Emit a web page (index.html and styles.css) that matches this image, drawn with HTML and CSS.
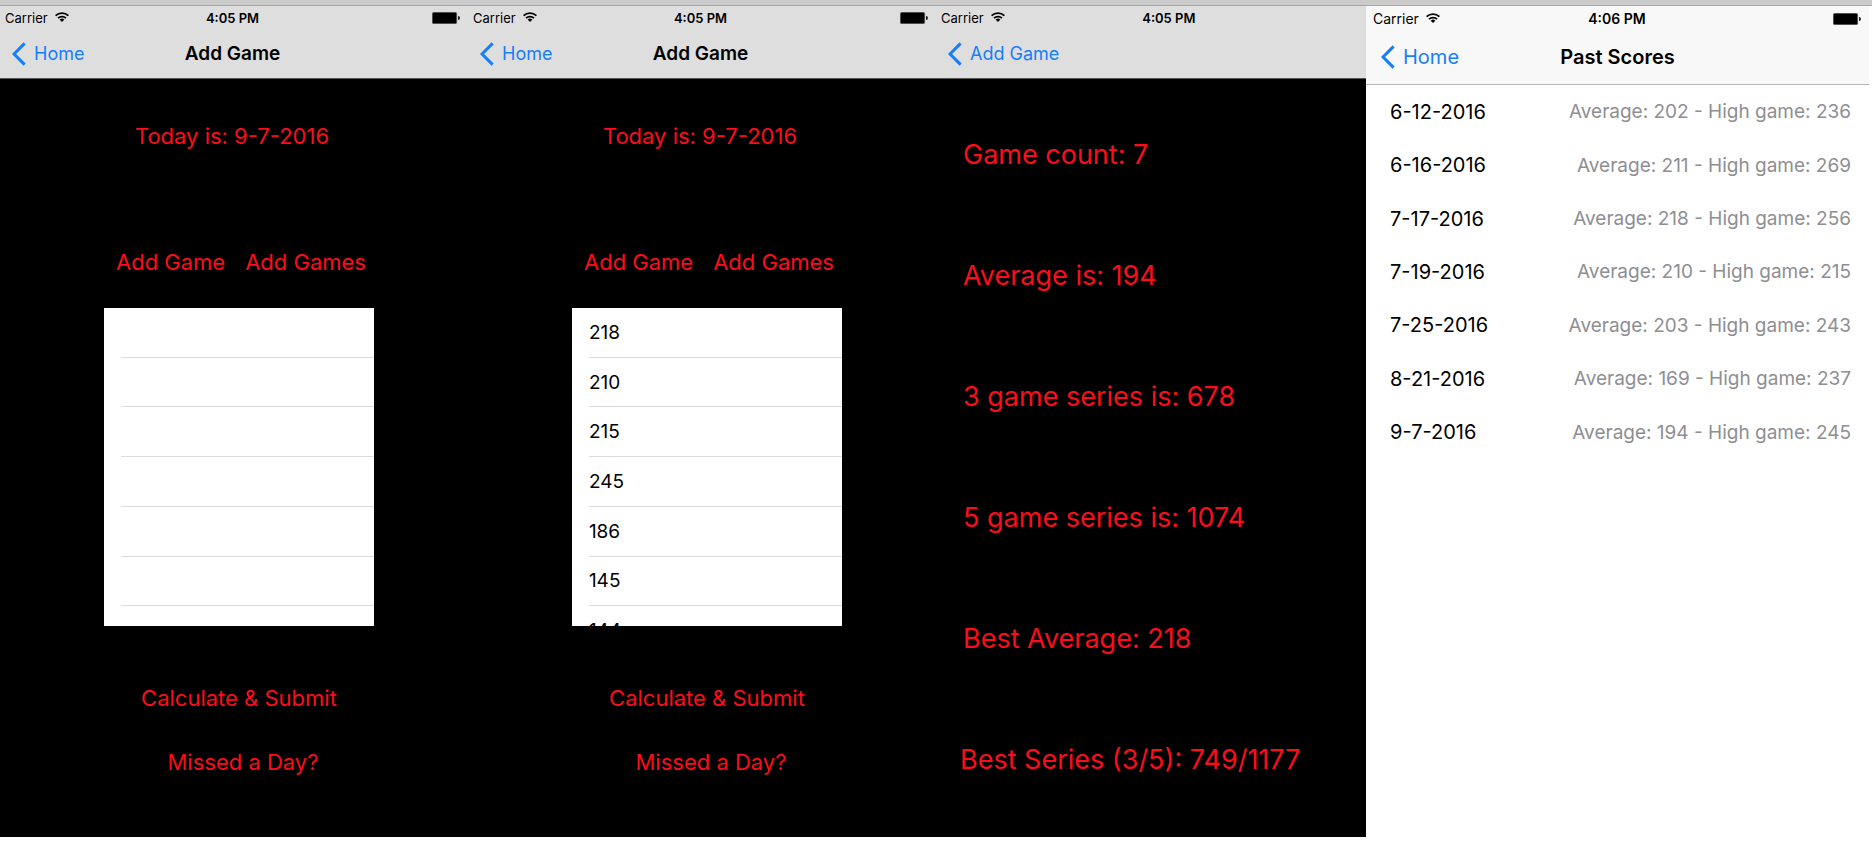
FILE: index.html
```html
<!DOCTYPE html>
<html lang="en">
<head>
<meta charset="utf-8">
<title>Bowling Scores</title>
<link rel="stylesheet" href="styles.css">
</head>
<body>
<svg class="defs" aria-hidden="true">
  <symbol id="wifi" viewBox="0 0 14 10">
    <path d="M.6 3.7a9 9 0 0 1 12.8 0M3 6.2a5.7 5.7 0 0 1 8 0" fill="none" stroke="currentColor" stroke-width="1.7"/>
    <path d="M4.7 7.8a3.2 3.2 0 0 1 4.6 0L7 10z" fill="currentColor"/>
  </symbol>
  <symbol id="battery" viewBox="0 0 28 12">
    <rect x=".25" y=".25" width="24.5" height="11.5" rx="1.5" fill="#000" stroke="#777" stroke-width=".5"/>
    <path d="M26 4a2 2 0 0 1 0 4z" fill="#222"/>
  </symbol>
  <symbol id="back" viewBox="0 0 14 24">
    <path d="M12.6 1.4 2 12l10.6 10.6" fill="none" stroke="currentColor" stroke-width="3"/>
  </symbol>
</svg>
<div class="strip"></div>
<main class="screens">
  <section class="screen dark">
    <header class="bar">
      <div class="status">
        <span class="carrier">Carrier <svg class="wifi"><use href="#wifi"/></svg></span>
        <span class="time">4:05 PM</span>
        <svg class="battery"><use href="#battery"/></svg>
      </div>
      <nav class="nav">
        <a class="back" href="#home"><svg class="chevron"><use href="#back"/></svg>Home</a>
        <h1 class="title">Add Game</h1>
      </nav>
    </header>
    <div class="entry">
      <p class="today">Today is: 9-7-2016</p>
      <div class="form">
        <div class="actions"><button class="action">Add Game</button><button class="action">Add Games</button></div>
        <div class="list">
          <ul class="scores"><li></li><li></li><li></li><li></li><li></li><li></li><li></li></ul>
        </div>
        <button class="action submit">Calculate &amp; Submit</button>
        <button class="action missed">Missed a Day?</button>
      </div>
    </div>
  </section>

  <section class="screen dark">
    <header class="bar">
      <div class="status">
        <span class="carrier">Carrier <svg class="wifi"><use href="#wifi"/></svg></span>
        <span class="time">4:05 PM</span>
        <svg class="battery"><use href="#battery"/></svg>
      </div>
      <nav class="nav">
        <a class="back" href="#home"><svg class="chevron"><use href="#back"/></svg>Home</a>
        <h1 class="title">Add Game</h1>
      </nav>
    </header>
    <div class="entry">
      <p class="today">Today is: 9-7-2016</p>
      <div class="form">
        <div class="actions"><button class="action">Add Game</button><button class="action">Add Games</button></div>
        <div class="list">
          <ul class="scores"><li>218</li><li>210</li><li>215</li><li>245</li><li>186</li><li>145</li><li>144</li></ul>
        </div>
        <button class="action submit">Calculate &amp; Submit</button>
        <button class="action missed">Missed a Day?</button>
      </div>
    </div>
  </section>

  <section class="screen dark">
    <header class="bar bar-cut">
      <div class="status">
        <span class="carrier">Carrier <svg class="wifi"><use href="#wifi"/></svg></span>
        <span class="time">4:05 PM</span>
      </div>
      <nav class="nav">
        <a class="back" href="#add-game"><svg class="chevron"><use href="#back"/></svg>Add Game</a>
      </nav>
    </header>
    <div class="results">
      <p>Game count: 7</p>
      <p>Average is: 194</p>
      <p>3 game series is: 678</p>
      <p>5 game series is: 1074</p>
      <p>Best Average: 218</p>
      <p class="best">Best Series (3/5): 749/1177</p>
    </div>
  </section>

  <section class="screen light">
    <header class="bar">
      <div class="status">
        <span class="carrier">Carrier <svg class="wifi"><use href="#wifi"/></svg></span>
        <span class="time">4:06 PM</span>
        <svg class="battery"><use href="#battery"/></svg>
      </div>
      <nav class="nav">
        <a class="back" href="#home"><svg class="chevron"><use href="#back"/></svg>Home</a>
        <h1 class="title">Past Scores</h1>
      </nav>
    </header>
    <table class="history">
      <tr><th scope="row">6-12-2016</th><td>Average: 202 - High game: 236</td></tr>
      <tr><th scope="row">6-16-2016</th><td>Average: 211 - High game: 269</td></tr>
      <tr><th scope="row">7-17-2016</th><td>Average: 218 - High game: 256</td></tr>
      <tr><th scope="row">7-19-2016</th><td>Average: 210 - High game: 215</td></tr>
      <tr><th scope="row">7-25-2016</th><td>Average: 203 - High game: 243</td></tr>
      <tr><th scope="row">8-21-2016</th><td>Average: 169 - High game: 237</td></tr>
      <tr><th scope="row">9-7-2016</th><td>Average: 194 - High game: 245</td></tr>
    </table>
  </section>
</main>
</body>
</html>
```
FILE: styles.css
```css
* { box-sizing: border-box; }

body {
  margin: 0;
  background: #fff;
  color: #000;
  font-family: Inter, "Liberation Sans", sans-serif;
}

h1, p, ul { margin: 0; padding: 0; }

.defs { position: absolute; width: 0; height: 0; }

.strip {
  height: 6px;
  background: #cbcbcb;
  border-bottom: 1px solid #a8a8a8;
}

.screens {
  display: grid;
  grid-template-columns: 468fr 468fr 430fr 503fr;
  padding-right: 3px;
}

.screen { min-width: 0; overflow: hidden; }

.dark { background: #000; color: #fc0d1b; }

/* Status and navigation bars */
.bar {
  height: 73px;
  background: #dedede;
  border-bottom: 1px solid #555;
  color: #000;
}

.bar-cut { width: 109%; }

.status, .nav {
  display: grid;
  grid-template-columns: 1fr auto 1fr;
  align-items: center;
}

.status {
  height: 24px;
  padding: 0 8px 0 5px;
  font-size: 13px;
}

.carrier { display: flex; align-items: center; gap: 7px; }
.wifi { width: 14px; height: 10px; margin-bottom: 2px; }
.time { font-weight: 600; }
.battery { width: 28px; height: 12px; justify-self: end; }

.nav { height: 47px; padding: 0 15px 0 12px; }

.back {
  display: flex;
  align-items: center;
  gap: 8px;
  color: #157efb;
  font-size: 18px;
  text-decoration: none;
  white-space: nowrap;
}

.chevron { width: 14px; height: 24px; }
.title { font-size: 19px; font-weight: 600; }

/* Game entry */
.entry { padding: 42px 0 60px; }

.today {
  padding-right: 4px;
  font-size: 22px;
  line-height: 30px;
  text-align: center;
}

.form {
  display: flex;
  flex-direction: column;
  align-items: center;
  padding: 96px 0 0 10px;
}

.actions { display: flex; gap: 20px; margin-bottom: 31px; padding-left: 4px; }

.action {
  padding: 0;
  border: 0;
  background: none;
  color: inherit;
  font: inherit;
  font-size: 22px;
  line-height: 30px;
}

.list {
  width: 59%;
  height: 318px;
  overflow: hidden;
  background: #fff;
  color: #000;
}

.scores {
  display: grid;
  grid-auto-rows: 1fr;
  height: 348px;
  margin-left: 17px;
  list-style: none;
}

.scores li {
  display: flex;
  align-items: center;
  border-bottom: 1px solid #dcdcdc;
  font-size: 19px;
}

.submit { margin-top: 57px; }
.missed { margin: 34px 0 0 8px; }

/* Results */
.results {
  display: grid;
  gap: 85px;
  padding: 58px 0 0 27px;
  font-size: 27px;
  line-height: 36px;
  white-space: nowrap;
}

.best { margin-left: -3px; }

/* Past scores */
.light .bar { height: 79px; background: #f8f8f8; border-color: #b4b4b4; }
.light .status { height: 25px; padding: 0 8px 0 7px; font-size: 14px; }
.light .nav { height: 51px; padding: 0 15px; }
.light .back, .light .title { font-size: 20px; }

.history {
  width: 100%;
  height: 374px;
  border-collapse: collapse;
  font-size: 19px;
}

.history th { padding: 0 0 0 24px; font-size: 20px; font-weight: 400; text-align: left; }
.history td { padding: 0 18px 0 0; color: #8e8e93; text-align: right; }
```
